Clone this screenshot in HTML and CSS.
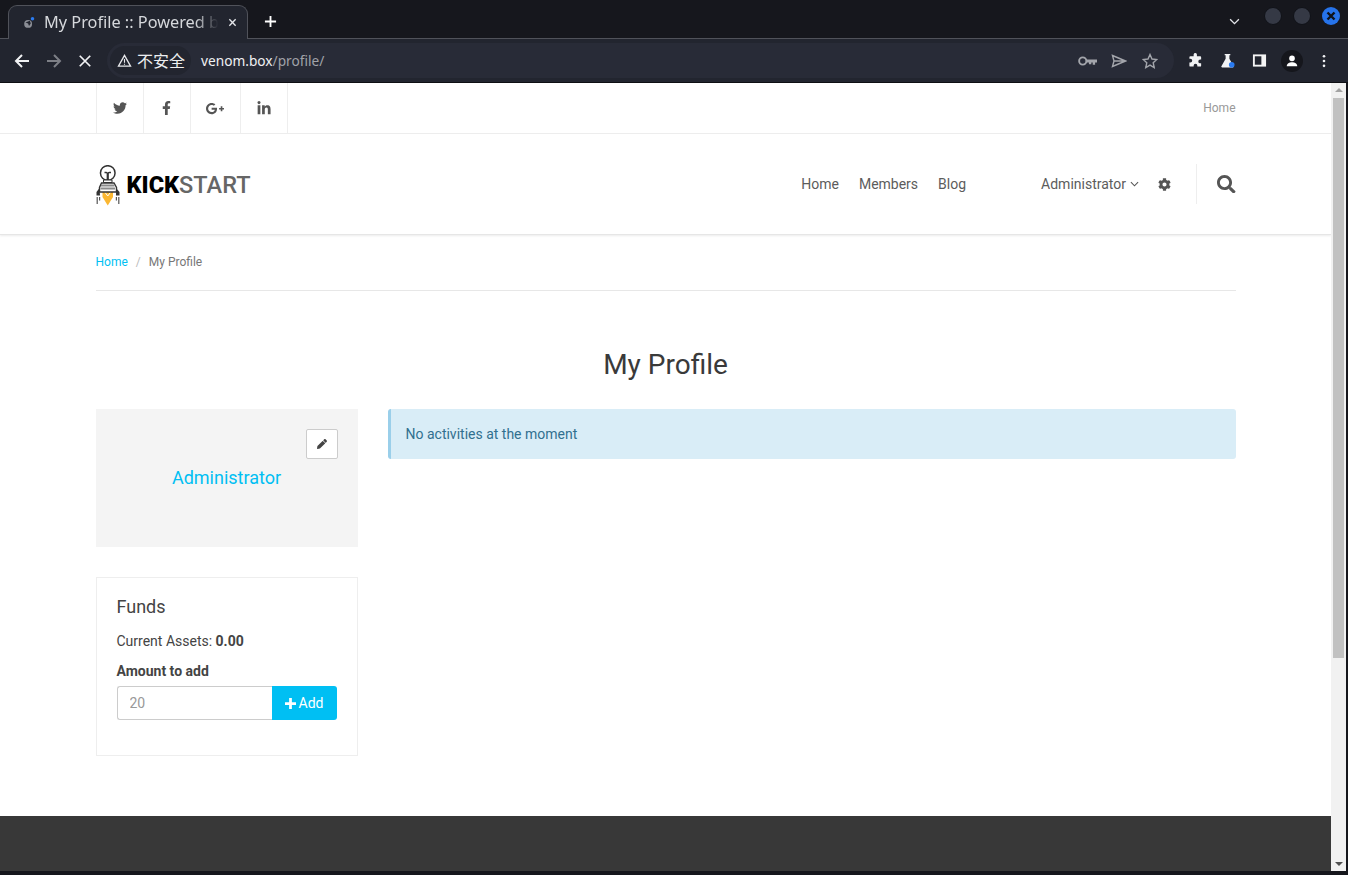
FILE: index.html
```html
<!DOCTYPE html>
<html lang="en">
<head>
<meta charset="utf-8">
<title>My Profile</title>
<link rel="stylesheet" href="styles.css">
</head>
<body>
<div class="window">
  <div class="browser">
    <div class="tabstrip">
      <div class="tab">
        <svg class="favicon" viewBox="0 0 16 16"><circle cx="7" cy="9" r="4.5" fill="#8b8e96"/><path d="M4 7.5l3 1 1 3 2-3-1-3z" fill="#22252f"/><circle cx="12" cy="3" r="2" fill="#2a7bf0"/></svg>
        <span class="tab-title">My Profile :: Powered b</span>
        <svg class="tab-x" viewBox="0 0 10 10"><path d="M1.5 1.5l7 7M8.5 1.5l-7 7" stroke="#e4e6ea" stroke-width="1.5"/></svg>
      </div>
      <svg class="newtab" viewBox="0 0 14 14"><path d="M7 1v12M1 7h12" stroke="#fff" stroke-width="2"/></svg>
      <div class="strip-end">
        <svg class="tabsearch" viewBox="0 0 12 8"><path d="M1 1.5l5 5 5-5" fill="none" stroke="#e4e6ea" stroke-width="1.5"/></svg>
        <span class="winbtn"></span>
        <span class="winbtn"></span>
        <span class="winbtn closebtn"><svg viewBox="0 0 10 10"><path d="M1.5 1.5l7 7M8.5 1.5l-7 7" stroke="#10131a" stroke-width="2.4"/></svg></span>
      </div>
    </div>
    <div class="toolbar">
      <svg class="navicon" viewBox="0 0 16 16"><path d="M15 8H2M8 2L2 8l6 6" fill="none" stroke="#f1f2f4" stroke-width="2"/></svg>
      <svg class="navicon dim" viewBox="0 0 16 16"><path d="M1 8h13M8 2l6 6-6 6" fill="none" stroke="#7d7f86" stroke-width="2"/></svg>
      <svg class="navicon stop" viewBox="0 0 16 16"><path d="M2 2l12 12M14 2L2 14" fill="none" stroke="#f1f2f4" stroke-width="2"/></svg>
      <div class="omnibox">
        <div class="chip">
          <svg class="warn" viewBox="0 0 16 14"><path d="M8 1.500l6.500 11.500h-13z" fill="none" stroke="#e8e9ec" stroke-width="1.4"/><path d="M8 5.500v4M8 10.500v1.200" stroke="#e8e9ec" stroke-width="1.2"/></svg>
          <span class="chip-text">不安全</span>
        </div>
        <span class="url"><span class="url-host">venom.box</span>/profile/</span>
        <div class="omni-icons">
          <svg class="oicon key" viewBox="0 0 20 12"><circle cx="5" cy="6" r="3.800" fill="none" stroke="#a3a5ab" stroke-width="2"/><path d="M9 4.500h11v3h-2v2.500h-2.500V7.500h-1.500v2h-2.500V7.500H9z" fill="#a3a5ab"/></svg>
          <svg class="oicon send" viewBox="0 0 16 14"><path d="M1.500 1.500L14.500 7 1.500 12.500l1.500-5.500zM3 7h11" fill="none" stroke="#a3a5ab" stroke-width="1.400"/></svg>
          <svg class="oicon star" viewBox="0 0 16 16"><path d="M8 1.500l2 4.500 4.800.5-3.600 3.200 1 4.800L8 12.100l-4.200 2.400 1-4.800L1.200 6.500 6 6z" fill="none" stroke="#a3a5ab" stroke-width="1.400"/></svg>
        </div>
      </div>
      <div class="extensions">
        <svg class="exicon" viewBox="0 0 16 16"><path d="M6 1.500a1.800 1.800 0 0 1 3.500 0V3.500h3.500a1 1 0 0 1 1 1V7h-1a2 2 0 0 0 0 4h1v2.500a1 1 0 0 1-1 1H10v-1a2 2 0 0 0-4 0v1H2.500a1 1 0 0 1-1-1V10h1a2 2 0 0 0 0-4h-1V4.500a1 1 0 0 1 1-1H6z" fill="#f1f2f4"/></svg>
        <svg class="exicon" viewBox="0 0 16 16"><path d="M5 1h6v1.500h-1V6l4.500 8a1 1 0 0 1-1 1.500H2.500a1 1 0 0 1-1-1.500L6 6V2.500H5z" fill="#f1f2f4"/><circle cx="12.500" cy="12.500" r="3" fill="#2a7bf0"/></svg>
        <svg class="exicon" viewBox="0 0 16 16"><path d="M1 1.500h14v13H1z" fill="#f4f4f4"/><path d="M3 3.500h7v9H3z" fill="#22252f"/></svg>
        <span class="avatar"><svg viewBox="0 0 16 16"><circle cx="8" cy="5" r="3.200" fill="#fff"/><path d="M2 14c0-3 3-4.500 6-4.500s6 1.500 6 4.500z" fill="#fff"/></svg></span>
        <svg class="kebab" viewBox="0 0 4 16"><circle cx="2" cy="2.500" r="1.500" fill="#f1f2f4"/><circle cx="2" cy="8" r="1.500" fill="#f1f2f4"/><circle cx="2" cy="13.500" r="1.500" fill="#f1f2f4"/></svg>
      </div>
    </div>
  </div>

  <div class="viewport">
    <div class="page">
      <div class="topbar">
        <div class="container topbar-inner">
          <ul class="social">
            <li class="social-item"><svg class="si si-tw" viewBox="0 0 512 512"><path d="M459.37 151.716c.325 4.548.325 9.097.325 13.645 0 138.72-105.583 298.558-298.558 298.558-59.452 0-114.68-17.219-161.137-47.106 8.447.974 16.568 1.299 25.34 1.299 49.055 0 94.213-16.568 130.274-44.832-46.132-.975-84.792-31.188-98.112-72.772 6.498.974 12.995 1.624 19.818 1.624 9.421 0 18.843-1.3 27.614-3.573-48.081-9.747-84.143-51.98-84.143-102.985v-1.299c13.969 7.797 30.214 12.67 47.431 13.319-28.264-18.843-46.781-51.005-46.781-87.391 0-19.492 5.197-37.36 14.294-52.954 51.655 63.675 129.3 105.258 216.365 109.807-1.624-7.797-2.599-15.918-2.599-24.04 0-57.828 46.782-104.934 104.934-104.934 30.213 0 57.502 12.67 76.67 33.137 23.715-4.548 46.456-13.32 66.599-25.34-7.798 24.366-24.366 44.833-46.132 57.827 21.117-2.273 41.584-8.122 60.426-16.243-14.292 20.791-32.161 39.308-52.628 54.253z"/></svg></li>
            <li class="social-item"><svg class="si si-fb" viewBox="0 0 320 512"><path d="M279.14 288l14.22-92.66h-88.91v-60.13c0-25.35 12.42-50.06 52.24-50.06h40.42V6.26S260.43 0 225.36 0c-73.22 0-121.08 44.38-121.08 124.72v70.62H22.89V288h81.39v224h100.17V288z"/></svg></li>
            <li class="social-item social-wide"><svg class="si si-gp" viewBox="0 0 640 512"><path d="M386.061 228.496c1.834 9.692 3.143 19.384 3.143 31.956C389.204 370.205 315.599 448 204.8 448c-106.084 0-192-85.915-192-192s85.916-192 192-192c51.864 0 95.083 18.859 128.611 50.292l-52.126 50.03c-14.145-13.621-39.028-29.599-76.485-29.599-65.484 0-118.92 54.221-118.92 121.277 0 67.056 53.436 121.277 118.92 121.277 75.961 0 104.513-54.745 108.965-82.773H204.8v-66.009h181.261zm185.406 6.437V179.2h-56.001v55.733h-55.733v56.001h55.733v55.733h56.001v-55.733H627.2v-56.001h-55.733z"/></svg></li>
            <li class="social-item"><svg class="si si-li" viewBox="0 0 448 512"><path d="M100.28 448H7.4V148.9h92.88zM53.79 108.1C24.09 108.1 0 83.5 0 53.8a53.79 53.79 0 0 1 107.58 0c0 29.7-24.1 54.3-53.79 54.3zM447.9 448h-92.68V302.4c0-34.7-.7-79.2-48.29-79.2-48.29 0-55.69 37.7-55.69 76.7V448h-92.78V148.9h89.08v40.8h1.3c12.4-23.5 42.69-48.3 87.88-48.3 94 0 111.28 61.9 111.28 142.3V448z"/></svg></li>
          </ul>
          <a class="top-home">Home</a>
        </div>
      </div>

      <header class="header">
        <div class="container header-inner">
          <div class="logo">
            <svg class="logo-mark" viewBox="0 0 24 41">
              <path d="M6.500 25h10.500v7l-5.250 8.500-5.250-8.500z" fill="#fbb731"/>
              <path d="M8 26l3.750 5 3.750-5" fill="none" stroke="#fff" stroke-width="1"/>
              <circle cx="11.750" cy="8" r="7.300" fill="#fff" stroke="#333" stroke-width="1.500"/>
              <path d="M8.500 7.500h1.800a1 1 0 0 1 1 1v8M15 7.500h-1.800a1 1 0 0 0-1 1v8" fill="none" stroke="#333" stroke-width="1.300"/>
              <path d="M7.500 15h8.500v2.500H7.500z" fill="#fff" stroke="#333" stroke-width="1"/>
              <path d="M5.500 18h12.500l2.500 4.500v4.500h-17v-4.500z" fill="#fff" stroke="#333" stroke-width="1.400"/>
              <path d="M5 20.500h13.500M4.500 23.500h14.500" stroke="#8a8a8a" stroke-width="1.800"/>
              <path d="M3.500 23L.5 27v3.500h3.500zM20 23l3.500 4v3.500H20z" fill="#333"/>
              <path d="M1.200 32v7M3.600 32v3.500M22.800 32v7M20.400 32v3.500" stroke="#555" stroke-width="1.200"/>
            </svg>
            <span class="logo-text"><b class="logo-kick">KICK</b>START</span>
          </div>
          <nav class="nav">
            <a class="nav-link">Home</a>
            <a class="nav-link">Members</a>
            <a class="nav-link">Blog</a>
            <a class="nav-link nav-user">Administrator <svg class="chev" viewBox="0 0 10 6"><path d="M1 1l4 4 4-4" fill="none" stroke="#555" stroke-width="1.200"/></svg></a>
            <svg class="cog" viewBox="0 0 512 512"><path d="M487.4 315.7l-42.6-24.6c4.3-23.2 4.3-47 0-70.2l42.6-24.6c4.9-2.8 7.1-8.6 5.5-14-11.1-35.6-30-67.8-54.7-94.6-3.8-4.1-10-5.1-14.8-2.3L380.8 110c-17.9-15.4-38.5-27.3-60.8-35.1V25.8c0-5.6-3.9-10.5-9.4-11.7-36.7-8.2-74.3-7.8-109.2 0-5.5 1.2-9.4 6.1-9.4 11.700V75c-22.2 7.900-42.800 19.800-60.800 35.100L88.700 85.500c-4.900-2.800-11-1.900-14.800 2.300-24.700 26.700-43.600 58.900-54.700 94.600-1.700 5.400.6 11.200 5.500 14L67.300 221c-4.300 23.200-4.300 47 0 70.200l-42.600 24.600c-4.900 2.800-7.100 8.600-5.500 14 11.100 35.600 30 67.800 54.700 94.600 3.800 4.100 10 5.100 14.800 2.300l42.600-24.600c17.900 15.400 38.500 27.300 60.800 35.100v49.200c0 5.600 3.900 10.500 9.400 11.700 36.700 8.200 74.300 7.800 109.200 0 5.500-1.200 9.400-6.100 9.400-11.700v-49.200c22.200-7.900 42.800-19.800 60.800-35.100l42.600 24.600c4.900 2.800 11 1.900 14.800-2.300 24.700-26.700 43.600-58.900 54.700-94.600 1.500-5.500-.7-11.300-5.600-14.100zM256 336c-44.100 0-80-35.900-80-80s35.900-80 80-80 80 35.900 80 80-35.900 80-80 80z"/></svg>
            <span class="nav-search"><svg class="search" viewBox="0 0 512 512"><path d="M505 442.7L405.3 343c-4.5-4.5-10.600-7-17-7H372c27.600-35.300 44-79.700 44-128C416 93.100 322.900 0 208 0S0 93.100 0 208s93.100 208 208 208c48.300 0 92.700-16.400 128-44v16.300c0 6.400 2.500 12.500 7 17l99.700 99.700c9.400 9.400 24.600 9.400 33.900 0l28.300-28.300c9.400-9.400 9.400-24.600.1-34zM208 336c-70.700 0-128-57.200-128-128 0-70.700 57.200-128 128-128 70.700 0 128 57.200 128 128 0 70.700-57.200 128-128 128z"/></svg></span>
          </nav>
        </div>
      </header>

      <main class="container">
        <div class="breadcrumb">
          <a class="crumb-link">Home</a>
          <span class="crumb-sep">/</span>
          <span class="crumb-current">My Profile</span>
        </div>
        <h1 class="title">My Profile</h1>
        <div class="columns">
          <aside class="sidebar">
            <div class="profile-card">
              <button class="edit-btn"><svg class="pencil" viewBox="0 0 512 512"><path d="M497.900 142.100l-46.100 46.100c-4.700 4.700-12.300 4.700-17 0l-111-111c-4.700-4.700-4.700-12.300 0-17l46.100-46.100c18.700-18.700 49.100-18.700 67.900 0l60.100 60.100c18.800 18.700 18.800 49.100 0 67.900zM284.200 99.800L21.600 362.400.4 483.900c-2.900 16.400 11.400 30.600 27.800 27.800l121.500-21.300 262.600-262.600c4.700-4.700 4.700-12.300 0-17l-111-111c-4.800-4.700-12.400-4.700-17.100 0z"/></svg></button>
              <a class="profile-name">Administrator</a>
            </div>
            <div class="funds">
              <h3 class="funds-title">Funds</h3>
              <p class="funds-assets">Current Assets: <b>0.00</b></p>
              <label class="funds-label">Amount to add</label>
              <div class="input-group">
                <input class="funds-input" type="text" placeholder="20">
                <button class="add-btn"><svg class="plus" viewBox="0 0 12 12"><path d="M4.500 0h3v4.500H12v3H7.500V12h-3V7.500H0v-3h4.500z"/></svg> Add</button>
              </div>
            </div>
          </aside>
          <section class="content">
            <div class="alert">No activities at the moment</div>
          </section>
        </div>
      </main>

      <footer class="footer"></footer>
    </div>
    <div class="scrollbar">
      <span class="arrow-up"></span>
      <span class="thumb"></span>
      <span class="arrow-down"></span>
    </div>
  </div>
</div>
</body>
</html>
```

FILE: styles.css
```css
* { box-sizing: border-box; }
html, body { margin: 0; padding: 0; height: 100%; overflow: hidden; }
body { background: #15161c; font-family: Roboto, "Liberation Sans", sans-serif; font-size: 14px; color: #444; }
.window { display: flex; flex-direction: column; height: 875px; padding-right: 2px; padding-bottom: 4px; }
.browser { margin-right: -2px; flex: none; }

.tabstrip { height: 39px; background: #16171d; display: flex; align-items: flex-end; padding-left: 8px; border-bottom: 1px solid #50525a; }
.tab { width: 240px; height: 34px; margin-bottom: -1px; background: #22252f; border: 1px solid #50525a; border-bottom: 0; border-radius: 9px 9px 0 0; display: flex; align-items: center; padding: 0 10px 0 13px; position: relative; }
.favicon { width: 14px; height: 14px; flex: none; }
.tab-title { font-family: "Noto Sans", sans-serif; font-size: 16.3px; line-height: 22px; padding-bottom: 2px; color: #d6d8dc; margin-left: 8px; white-space: nowrap; flex: 1; -webkit-mask-image: linear-gradient(to right, #000 85%, transparent 98%); mask-image: linear-gradient(to right, #000 85%, transparent 98%); }
.tab-x { width: 9px; height: 9px; flex: none; margin-left: 6px; }
.newtab { width: 13px; height: 13px; margin: 0 0 10px 16px; }
.strip-end { margin-left: auto; display: flex; align-items: center; align-self: flex-start; height: 32px; }
.tabsearch { width: 11px; height: 7px; margin: 11px 24px 0 0; }
.winbtn { width: 18px; height: 18px; margin-right: 11px; margin-top: 0; border-radius: 50%; background: #353945; border: 1px solid #101218; display: flex; align-items: center; justify-content: center; }
.closebtn { background: #2673ea; margin-right: 8px; border: 0; }
.closebtn svg { width: 10px; height: 10px; }

.toolbar { height: 44px; background: #22252f; border-bottom: 1px solid #0e0f13; display: flex; align-items: center; padding: 0 14px 0 14px; }
.navicon { width: 16px; height: 16px; flex: none; margin-right: 16px; }
.stop { width: 14px; height: 14px; margin-right: 15px; }
.omnibox { width: 1067px; height: 35px; background: #282b37; border-radius: 18px; display: flex; align-items: center; padding: 0 16px 0 3px; }
.chip { height: 29px; width: 81px; border-radius: 15px; background: #22252f; display: flex; align-items: center; padding-left: 7px; }
.warn { width: 15px; height: 13px; flex: none; }
.chip-text { font-family: "Noto Sans CJK SC", sans-serif; font-size: 16px; line-height: 22px; padding-bottom: 2px; color: #eceef0; margin-left: 5px; white-space: nowrap; }
.url { font-family: "Noto Sans", sans-serif; font-size: 13.7px; color: #a0a2a8; margin-left: 10px; }
.url-host { color: #f0f1f3; }
.omni-icons { margin-left: auto; display: flex; align-items: center; gap: 14px; }
.oicon { height: 14px; flex: none; }
.key { width: 19px; height: 12px; margin-left: -2px; }
.send { width: 16px; }
.star { width: 16px; height: 16px; margin-left: 1px; }
.extensions { display: flex; align-items: center; flex: 1; padding-left: 14px; }
.exicon { width: 15px; height: 15px; flex: none; margin-right: 17px; }
.avatar { width: 22px; height: 22px; border-radius: 50%; background: #15161c; display: flex; align-items: center; justify-content: center; margin: 0 19px 0 -3px; flex: none; }
.avatar svg { width: 14px; height: 14px; }
.kebab { width: 4px; height: 14px; flex: none; }

.viewport { flex: 1; display: flex; min-height: 0; }
.page { flex: 1; display: flex; flex-direction: column; background: #fff; min-width: 0; }
.container { width: 1140px; margin: 0 auto; }

.topbar { height: 51px; border-bottom: 1px solid #eeeeee; flex: none; }
.topbar-inner { display: flex; justify-content: space-between; align-items: center; height: 100%; }
.social { list-style: none; margin: 0; padding: 0; display: flex; height: 100%; border-left: 1px solid #eeeeee; }
.social-item { width: 47px; height: 100%; border-right: 1px solid #eeeeee; display: flex; align-items: center; justify-content: center; }
.social-wide { width: 50px; }
.si { fill: #555; display: block; }
.si-tw { width: 14px; height: 14px; }
.si-fb { width: 9px; height: 14px; }
.si-gp { width: 20px; height: 15px; }
.si-li { width: 14px; height: 15px; }
.top-home { font-size: 12px; color: #999; }

.header { height: 101px; flex: none; border-bottom: 1px solid #e6e6e6; box-shadow: 0 1px 2px rgba(0, 0, 0, 0.08); }
.header-inner { display: flex; align-items: center; justify-content: space-between; height: 100%; }
.logo { display: flex; align-items: center; }
.logo-mark { width: 24px; height: 41px; flex: none; margin-top: 2px; }
.logo-text { font-size: 23.5px; font-weight: 500; color: #666; margin-left: 7px; margin-top: 3px; line-height: 1; }
.logo-kick { font-weight: 900; color: #000; }
.nav { display: flex; align-items: center; }
.nav-link { color: #5c5c5c; font-size: 14px; margin-right: 20px; white-space: nowrap; display: flex; align-items: center; }
.nav-user { margin-left: 55px; margin-right: 19px; gap: 4px; }
.chev { width: 9px; height: 6px; }
.cog { width: 13px; height: 13px; fill: #555; flex: none; }
.nav-search { border-left: 1px solid #eeeeee; height: 40px; margin-left: 25px; padding-left: 20px; display: flex; align-items: center; }
.search { width: 18.500px; height: 18.500px; fill: #555; display: block; }

.breadcrumb { height: 56px; padding-bottom: 2px; border-bottom: 1px solid #e7e7e7; display: flex; align-items: center; font-size: 12px; }
.crumb-link { color: #00bff3; }
.crumb-sep { color: #bbb; margin: 0 8px; }
.crumb-current { color: #777; }
.title { font-size: 28px; font-weight: 400; color: #3a3a3a; text-align: center; margin: 57px 0 27px; line-height: 34px; }
.columns { display: grid; grid-template-columns: 262px 848px; gap: 30px; margin-bottom: 60px; }
.profile-card { height: 138px; background: #f4f4f4; position: relative; display: flex; justify-content: center; padding-top: 58px; }
.edit-btn { position: absolute; top: 20px; right: 20px; width: 32px; height: 30px; border: 1px solid #ccc; border-radius: 2px; background: #fff; display: flex; align-items: center; justify-content: center; padding: 0; }
.pencil { width: 10px; height: 10px; fill: #444; }
.profile-name { color: #00bff3; font-size: 18px; line-height: 22px; }
.funds { margin-top: 30px; height: 179px; border: 1px solid #eeeeee; padding: 19px 20px 20px; }
.funds-title { font-size: 18px; font-weight: 400; color: #444; margin: 0; line-height: 20px; }
.funds-assets { margin: 14px 0 0; line-height: 20px; color: #444; }
.funds-label { display: block; font-weight: 700; margin-top: 10px; line-height: 20px; color: #444; }
.input-group { display: flex; margin-top: 5px; height: 34px; }
.funds-input { width: 155px; height: 34px; border: 1px solid #ccc; border-right: 0; border-radius: 3px 0 0 3px; padding: 0 12px; font-family: Roboto, sans-serif; font-size: 14px; background: #fff; }
.funds-input::placeholder { color: #999; opacity: 1; }
.add-btn { flex: 1; border: 0; background: #00bff3; color: #fff; border-radius: 0 3px 3px 0; font-family: Roboto, sans-serif; font-size: 14px; padding: 0; display: flex; align-items: center; justify-content: center; gap: 3px; }
.plus { width: 11px; height: 11px; fill: #fff; }
.alert { height: 50px; background: #d9edf7; border-left: 3px solid #9acfea; border-radius: 3px; color: #31708f; display: flex; align-items: center; padding-left: 15px; }

.footer { flex: 1; background: #383838; }

.scrollbar { width: 15px; flex: none; background: #f1f1f1; position: relative; display: flex; flex-direction: column; align-items: center; }
.arrow-up { width: 0; height: 0; border: 4px solid transparent; border-top: 0; border-bottom: 4px solid #a3a3a3; margin-top: 5px; }
.thumb { width: 11px; height: 560px; background: #c1c1c1; margin-top: 6px; }
.arrow-down { width: 0; height: 0; border: 4px solid transparent; border-bottom: 0; border-top: 4px solid #505050; margin-top: auto; margin-bottom: 5px; }
```
